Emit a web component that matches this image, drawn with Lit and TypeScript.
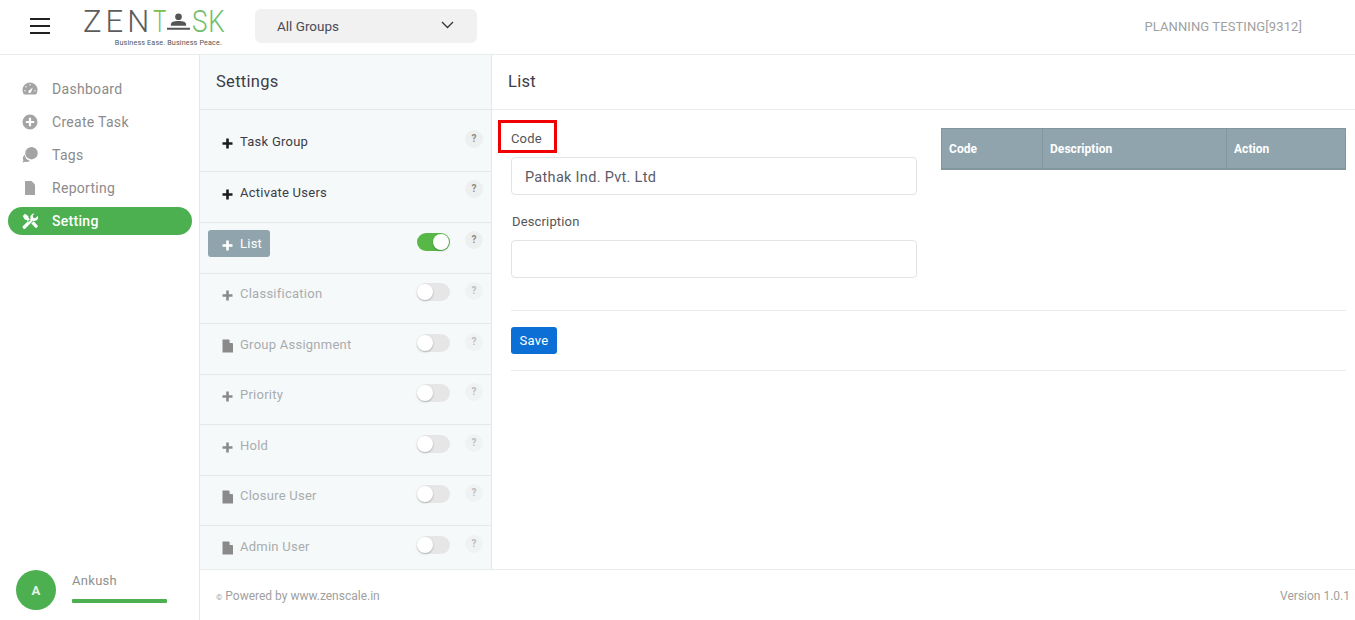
import { LitElement, html, css, svg } from "lit";
import { customElement } from "lit/decorators.js";

const plus = svg`<path d="M4.200 0.500h2.600v3.700h3.700v2.600H6.800v3.700H4.200V6.800H0.500V4.200h3.700z"/>`;
const doc = svg`<path d="M0.500 0.500h6.500l4 4v9h-10.500z"/><path d="M7.600 0.500l3.400 3.400H7.600z" fill="#f5f9fa"/>`;

const rows = [
  { t: "Task Group", icon: "plus", tall: true, on: null, state: "plain" },
  { t: "Activate Users", icon: "plus", on: null, state: "plain" },
  { t: "List", icon: "plus", on: true, state: "active" },
  { t: "Classification", icon: "plus", on: false, state: "dim", h: 50 },
  { t: "Group Assignment", icon: "doc", on: false, state: "dim low", h: 51 },
  { t: "Priority", icon: "plus", on: false, state: "dim", h: 50 },
  { t: "Hold", icon: "plus", on: false, state: "dim low", h: 51 },
  { t: "Closure User", icon: "doc", on: false, state: "dim", h: 50 },
  { t: "Admin User", icon: "doc", on: false, state: "dim low", h: 44 },
];

const navIcons: Record<string, unknown> = {
  Dashboard: svg`<path fill-rule="evenodd" d="M8 1.500a7.500 7.500 0 0 1 6.800 10.700c-.4.800-1 1.300-1.900 1.300H3.100c-.9 0-1.500-.5-1.900-1.300A7.500 7.500 0 0 1 8 1.500zM10.800 6.500 7.400 9.200a1.400 1.400 0 1 0 1.700 1.700zM8 3a.7.7 0 1 0 0 1.400A.7.7 0 0 0 8 3zM4 5a.7.7 0 1 0 0 1.400A.7.7 0 0 0 4 5zM3 9a.7.7 0 1 0 0 1.400A.7.7 0 0 0 3 9zM13 9a.7.7 0 1 0 0 1.400A.7.7 0 0 0 13 9z"/>`,
  "Create Task": svg`<path fill-rule="evenodd" d="M8 .5a7.500 7.500 0 1 1 0 15 7.500 7.500 0 0 1 0-15zM6.900 3.800v3.100H3.800v2.200h3.100v3.100h2.200V9.100h3.100V6.900H9.100V3.800z"/>`,
  Tags: svg`<circle cx="9.500" cy="6.200" r="6.200"/><path d="M2.800 7.800a6.800 6.800 0 0 0 5.200 6c-1.300 1.200-3.200 1.400-4.800 1l-2.700.8.900-2.300C.2 11.600.9 9.200 2.800 7.800z"/>`,
  Reporting: svg`<path d="M3 1h6.500L13 4.500V15H3z"/>`,
  Setting: svg`<path d="M.8 3 3 .8l3.400 2.400v1.500l2.300 2.300-2 2-2.300-2.300H2.900zM12.400.6a3.800 3.800 0 0 0-3.800 4.900L1 13a1.700 1.700 0 0 0 2.400 2.400l7.500-7.600a3.800 3.800 0 0 0 4.900-4.900l-2.400 2.300-2.200-.4-.5-2.200zM9.300 10.600l2.300-2.300 3.600 3.700a1.600 1.600 0 0 1-2.300 2.300z"/>`,
};

@customElement("app-root")
export class AppRoot extends LitElement {
  static styles = css`
    :host {
      display: flex;
      flex-direction: column;
      height: 620px;
      overflow: hidden;
      background: #fff;
      font-family: Roboto, "Noto Sans", sans-serif;
      font-size: 14px;
      letter-spacing: 0.3px;
      color: #333;
    }
    .top {
      height: 54px;
      flex: none;
      display: flex;
      align-items: center;
      border-bottom: 1px solid #e9ecec;
    }
    .burger {
      width: 20px;
      margin-left: 30px;
      margin-top: -2px;
      display: flex;
      flex-direction: column;
      gap: 5px;
    }
    .burger i { display: block; height: 2px; background: #212121; }
    .logo {
      margin-left: 33px;
      width: 139px;
      height: 38px;
      display: flex;
      flex-direction: column;
      align-items: flex-end;
      margin-top: 2px;
    }
    .word {
      width: 139px;
      height: 26px;
      display: flex;
      align-items: center;
      font-size: 31px;
      font-weight: 300;
      line-height: 26px;
      color: #5c5c5c;
      letter-spacing: 0;
      white-space: nowrap;
    }
    .word span { flex: none; display: block; transform-origin: left center; }
    .word .zen { letter-spacing: 4px; }
    .word .g { color: #7cc04b; width: 14px; transform: scaleX(0.72); }
    .word .g2 { color: #70bd6c; width: 33px; margin-left: 2px; letter-spacing: 1px; transform: scaleX(0.84); }
    .word svg { width: 23px; height: 20px; fill: #555; flex: none; }
    .tag {
      font-size: 7.200px;
      line-height: 9px;
      color: #555;
      letter-spacing: 0.15px;
      margin-top: 3px;
      white-space: nowrap;
    }
    .select {
      margin-left: 33px;
      margin-top: -2px;
      width: 222px;
      height: 34px;
      box-sizing: border-box;
      padding: 0 23px 0 22px;
      background: #f1f1f1;
      border-radius: 6px;
      display: flex;
      align-items: center;
      justify-content: space-between;
      color: #4a4a55;
      font-size: 13.500px;
      letter-spacing: 0;
    }
    .select svg { width: 13px; height: 8px; fill: none; stroke: #333; stroke-width: 1.300; margin-top: -3px; }
    .org { margin-left: auto; margin-right: 53px; margin-top: -2px; color: #a0a0a0; font-size: 13px; letter-spacing: 0.1px; }

    .body { flex: 1; display: flex; min-height: 0; }
    .side {
      width: 199px;
      flex: none;
      border-right: 1px solid #e6e8e8;
      display: flex;
      flex-direction: column;
      padding-top: 17px;
      box-sizing: content-box;
    }
    .nav {
      height: 33px;
      display: flex;
      align-items: center;
      color: #8b8b8b;
      font-size: 14px;
    }
    .nav .pill {
      margin-left: 8px;
      width: 184px;
      height: 28px;
      border-radius: 14px;
      display: flex;
      align-items: center;
      padding: 1px 0 0 14px;
      box-sizing: border-box;
    }
    .nav svg { width: 16px; height: 16px; fill: #a4a4a4; margin-right: 14px; margin-top: -1px; flex: none; }
    .nav.on .pill { background: #4caf50; color: #fff; font-weight: 500; }
    .nav.on svg { fill: #fff; }
    .user {
      margin-top: auto;
      display: flex;
      padding: 0 32px 10px 16px;
      gap: 16px;
    }
    .avatar {
      width: 40px;
      height: 40px;
      border-radius: 50%;
      background: #4caf50;
      color: #e6f5e6;
      font-weight: 700;
      font-size: 13px;
      display: flex;
      align-items: center;
      justify-content: center;
      flex: none;
    }
    .uinfo { flex: 1; display: flex; flex-direction: column; }
    .uname { color: #8f8f8f; font-size: 13px; line-height: 20px; margin-top: 1px; }
    .ubar { height: 4px; border-radius: 1px; background: #4caf50; margin-top: 8px; }

    .content { flex: 1; display: flex; flex-direction: column; min-width: 0; }
    .panels { flex: 1; display: flex; min-height: 0; }
    .settings {
      width: 291px;
      flex: none;
      background: #f5f9fa;
      border-right: 1px solid #e6e8e8;
      box-sizing: content-box;
      overflow: hidden;
    }
    .shead {
      border-bottom: 1px solid #e3e8e9;
      padding: 0 0 1px 16px;
      box-sizing: content-box;
      height: 53px;
      display: flex;
      align-items: center;
      font-size: 16.500px;
      color: #3c3c46;
    }
    .row {
      border-bottom: 1px solid #e3e8e9;
      padding: 7px 8px 0;
      box-sizing: border-box;
      height: var(--h, 51px);
      display: flex;
      align-items: flex-start;
    }
    .row.tall { --h: 62px; padding-top: 18px; }
    .row.last { border-bottom: none; }
    .lbl {
      height: 27px;
      padding: 0 8px 0 14px;
      display: flex;
      align-items: center;
      font-size: 13px;
      letter-spacing: 0.25px;
      color: #3c3c46;
      border-radius: 3px;
    }
    .lbl svg { width: 11px; height: 11px; margin-right: 7px; fill: #1c1c1c; margin-top: 3px; flex: none; }
    .lbl svg.d { height: 14px; fill: #8a8a8a; margin-top: 3px; }
    .row.active .lbl { background: #90a4ae; color: #fff; }
    .row.active .lbl svg { fill: #fff; }
    .row.dim .lbl { color: #a9acae; }
    .row.dim .lbl svg { fill: #8a8a8a; }
    .row.dim { padding-top: 6px; }
    .row.dim.low { padding-top: 7px; }
    .toggle {
      margin-left: auto;
      margin-top: 3px;
      width: 33px;
      height: 18px;
      border-radius: 9px;
      position: relative;
      background: #e6e6e6;
      flex: none;
    }
    .toggle.on { background: #57b847; }
    .toggle i {
      position: absolute;
      top: 1px;
      left: 0;
      width: 16px;
      height: 16px;
      border-radius: 50%;
      background: #fff;
      box-shadow: 0 1px 2px rgba(0,0,0,0.25);
    }
    .toggle.on i { left: 16px; }
    .help {
      margin-left: 15px;
      margin-top: 1px;
      width: 18px;
      height: 18px;
      border-radius: 50%;
      background: #eef0f0;
      color: #8a8a8a;
      font-size: 10px;
      font-weight: 700;
      line-height: 17px;
      text-align: center;
      letter-spacing: 0;
      flex: none;
    }
    .row.none .help { margin-left: auto; margin-top: 1px; }
    .row.tall.none .help { margin-top: 2px; }
    .row.dim .help { color: #bdbdbd; background: #f0f3f3; margin-top: 2px; }

    .main { flex: 1; display: flex; flex-direction: column; min-width: 0; }
    .mhead {
      flex: none;
      height: 53px;
      padding: 0 0 1px 16px;
      box-sizing: content-box;
      border-bottom: 1px solid #e9ecec;
      display: flex;
      align-items: center;
      font-size: 16.500px;
      color: #3c3c46;
    }
    .mbody { padding: 18px 9px 0 19px; position: relative; }
    .cols { display: grid; grid-template-columns: 406px 405px; column-gap: 24px; }
    .field label {
      display: block;
      color: #555;
      font-size: 13px;
      letter-spacing: 0.15px;
      line-height: 20px;
      padding-left: 1px;
      margin-bottom: 9px;
    }
    .field { margin-bottom: 16px; }
    .field label.desc { padding-top: 1px; margin-bottom: 8px; }
    .input {
      height: 38px;
      box-sizing: border-box;
      border: 1px solid #e1e4e6;
      border-radius: 4px;
      padding: 2px 13px 0;
      display: flex;
      align-items: center;
      background: #fff;
      color: #5b5b68;
      font-size: 14.500px;
    }
    .field.one label { margin-bottom: 0; height: 29px; line-height: 21px; padding-left: 0; }
    .table {
      height: 42px;
      display: grid;
      grid-template-columns: 101px 184px 1fr;
      background: #90a4ae;
      border: 1px solid #82969f;
      border-bottom-width: 2px;
      box-sizing: border-box;
      color: #fff;
      font-size: 12px;
      font-weight: 700;
      letter-spacing: 0.05px;
    }
    .table div { display: flex; align-items: center; padding-left: 7px; border-right: 1px solid #82969f; }
    .table div:last-child { border-right: none; }
    hr { border: none; border-top: 1px solid #e9ecec; margin: 0; }
    .sep { margin-top: 16px; }
    .save {
      margin: 16px 0;
      width: 46px;
      height: 27px;
      border-radius: 3px;
      background: #0b6fd6;
      color: #fff;
      font-size: 13px;
      display: flex;
      align-items: center;
      justify-content: center;
    }
    .mark {
      position: absolute;
      left: 6px;
      top: 10px;
      width: 59px;
      height: 33px;
      box-sizing: border-box;
      border: 3px solid #f00000;
    }
    .foot {
      height: 51px;
      flex: none;
      border-top: 1px solid #e9ecec;
      display: flex;
      justify-content: space-between;
      align-items: center;
      box-sizing: border-box;
      padding: 2px 5px 0 16px;
      color: #a0a0a0;
      font-size: 12px;
      letter-spacing: 0;
    }
    .foot small { font-size: 8px; margin-right: 3px; }
  `;

  render() {
    const navs = ["Dashboard", "Create Task", "Tags", "Reporting", "Setting"];
    return html`
      <div class="top">
        <div class="burger"><i></i><i></i><i></i></div>
        <div class="logo">
          <div class="word">
            <span class="zen">ZEN</span><span class="g">T</span>
            <svg viewBox="0 0 24 20"><circle cx="12" cy="4.500" r="3.500"/><path d="M4 13c0-3 3-4 8-4s8 1 8 4v1H4zM0 16h24v2H0z"/></svg>
            <span class="g2">SK</span>
          </div>
          <div class="tag">Business Ease. Business Peace.</div>
        </div>
        <div class="select">
          <span>All Groups</span>
          <svg viewBox="0 0 13 8"><path d="M1 1l5.500 5.500L12 1"/></svg>
        </div>
        <div class="org">PLANNING TESTING[9312]</div>
      </div>
      <div class="body">
        <div class="side">
          ${navs.map(
            (n) => html`<div class="nav ${n === "Setting" ? "on" : ""}">
              <div class="pill"><svg viewBox="0 0 16 16">${navIcons[n]}</svg>${n}</div>
            </div>`
          )}
          <div class="user">
            <div class="avatar">A</div>
            <div class="uinfo"><div class="uname">Ankush</div><div class="ubar"></div></div>
          </div>
        </div>
        <div class="content">
          <div class="panels">
            <div class="settings">
              <div class="shead">Settings</div>
              ${rows.map(
                (r, i) => html`<div
                  class="row ${r.state} ${r.tall ? "tall" : ""} ${r.on === null ? "none" : ""} ${i === rows.length - 1 ? "last" : ""}"
                  style=${r.h ? `--h:${r.h}px` : ""}
                >
                  <div class="lbl">
                    ${r.icon === "plus"
                      ? html`<svg viewBox="0 0 11 11">${plus}</svg>`
                      : html`<svg class="d" viewBox="0 0 11 14">${doc}</svg>`}
                    ${r.t}
                  </div>
                  ${r.on === null ? "" : html`<div class="toggle ${r.on ? "on" : ""}"><i></i></div>`}
                  <div class="help">?</div>
                </div>`
              )}
            </div>
            <div class="main">
              <div class="mhead">List</div>
              <div class="mbody">
                <div class="cols">
                  <div>
                    <div class="field one">
                      <label>Code</label>
                      <div class="input">Pathak Ind. Pvt. Ltd</div>
                    </div>
                    <div class="field">
                      <label class="desc">Description</label>
                      <div class="input"></div>
                    </div>
                  </div>
                  <div class="table">
                    <div>Code</div>
                    <div>Description</div>
                    <div>Action</div>
                  </div>
                </div>
                <hr class="sep" />
                <div class="save">Save</div>
                <hr />
                <div class="mark"></div>
              </div>
            </div>
          </div>
          <div class="foot">
            <span><small>©</small>Powered by www.zenscale.in</span>
            <span>Version 1.0.1</span>
          </div>
        </div>
      </div>
    `;
  }
}
